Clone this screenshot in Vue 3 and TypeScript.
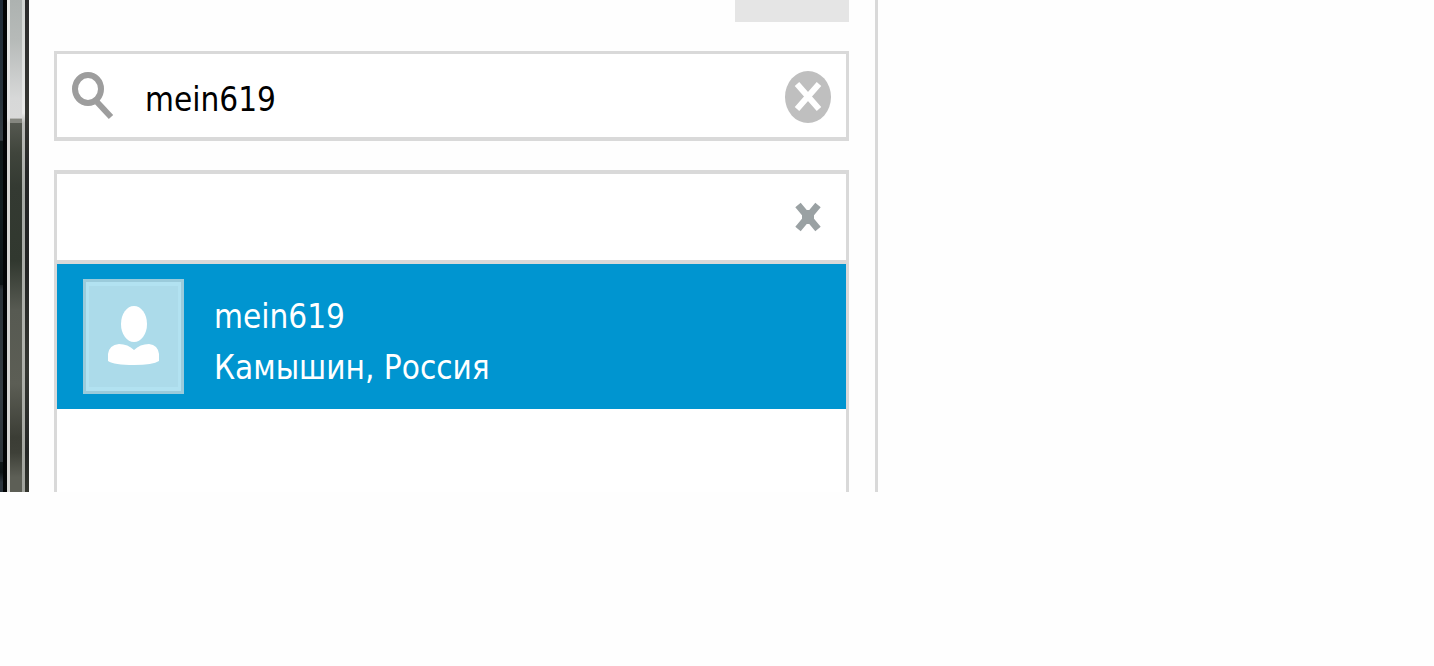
<script setup lang="ts">
import { ref } from 'vue'

interface Contact {
  name: string
  place: string
}

const query = ref('mein619')
const contacts: Contact[] = [{ name: 'mein619', place: 'Камышин, Россия' }]
</script>

<template>
  <main class="page">
    <div class="frame" aria-hidden="true">
      <span class="desktop"></span>
      <span class="shadow"></span>
      <span class="edge"></span>
      <span class="glass"></span>
      <span class="edge inner"></span>
      <span class="rim"></span>
    </div>

    <section class="sidebar">
      <div class="tab"></div>

      <form class="search" @submit.prevent>
        <svg class="lens" viewBox="0 0 42 50" aria-hidden="true">
          <ellipse cx="16" cy="17" rx="13" ry="14" />
          <path d="M25 30 L39 45" />
        </svg>
        <input v-model="query" type="text" aria-label="Search" spellcheck="false" />
        <button type="button" class="clear" aria-label="Clear" @click="query = ''">
          <svg viewBox="0 0 46 52" aria-hidden="true">
            <ellipse cx="23" cy="26" rx="23" ry="26" />
            <path d="M12 13 L34 38 M34 13 L12 38" />
          </svg>
        </button>
      </form>

      <div class="results">
        <header>
          <button type="button" class="close" aria-label="Close">
            <svg viewBox="0 0 26 30" aria-hidden="true">
              <path d="M3 3 L23 27 M23 3 L3 27" />
              <rect x="7" y="8" width="12" height="14" />
            </svg>
          </button>
        </header>
        <ul>
          <li v-for="contact in contacts" :key="contact.name">
            <svg class="avatar" viewBox="0 0 101 115" aria-hidden="true">
              <rect class="avatar-edge" width="101" height="115" />
              <rect class="avatar-glow" x="3" y="3" width="95" height="109" />
              <rect class="avatar-fill" x="6" y="7" width="89" height="101" />
              <ellipse class="person" cx="51" cy="45" rx="13" ry="18" />
              <path class="person" d="M25 75 Q26 66 36 65 Q45 65 51 71 Q57 65 66 65 Q75 66 76 75 V82 Q70 86 51 86 Q31 86 25 82 Z" />
            </svg>
            <div class="details">
              <span>{{ contact.name }}</span>
              <span>{{ contact.place }}</span>
            </div>
          </li>
        </ul>
      </div>
    </section>
  </main>
</template>

<style>
body {
  background: #fefefe;
}
</style>

<style scoped>
.page {
  display: grid;
  grid-template-columns: 29px minmax(0, 849fr) minmax(0, 556fr);
  font-family: "DejaVu Sans Condensed", "Noto Sans", sans-serif;
  font-size: 33px;
}

.frame {
  display: grid;
  grid-template-columns: 3px 4px 3px 12px 3px 4px;
}

.desktop {
  background: linear-gradient(#1d2a37, #26323b 20%, #343d43 28.5%, #0d1617 28.7%, #101c20 42%, #0b1214 58%, #1c2022 58%, #293238 59%, #333c43 80%, #2b3339 94%, #0e1618 94%, #0b1214 96%, #29323b 98%);
}

.shadow {
  background: #020405;
}

.edge {
  background: linear-gradient(#e8eae9, #e5e5e5 24%, #d6d6d4 25%, #d6d6d4);
}

.glass {
  background: linear-gradient(#adb2b0, #b6bab8 8%, #d7d8d8 20%, #d9d9d9 24%, #85867f 24.2%, #85867f 25%, #555850 25%, #40453c 31%, #343a32 38%, #31382f 53%, #575a52 63%, #5c5e55 78%, #3b3d35 89%, #3e4038 92%, #5d5f56 97%);
}

.edge.inner {
  background: linear-gradient(#d0d3d1, #e9eae9 23%, #babbb8 25%, #a5a9a4 40%, #b0b2ac 70%, #a2a49e);
}

.rim {
  background: linear-gradient(#2a2a2b, #353632 23%, #242626 35%, #222423 55%, #343631 75%, #242625 92%, #34362f);
}

.sidebar {
  padding: 0 26px 0 25px;
  border-right: 3px solid #d9d9d9;
}

.tab {
  width: 114px;
  height: 22px;
  margin-left: auto;
  background: #e5e5e5;
}

.search {
  display: flex;
  align-items: center;
  height: 80px;
  margin: 29px 0;
  padding: 3px 15px 0;
  border: 3px solid #d9d9d9;
  border-bottom-width: 4px;
  background: #fff;
}

.lens {
  flex: none;
  width: 42px;
  height: 50px;
  fill: none;
  stroke: #9d9d9d;
  stroke-width: 6;
}

.search input {
  flex: 1;
  min-width: 0;
  height: 48px;
  margin: 0 16px 0 31px;
  padding: 4px 0 0;
  border: 0;
  outline: 0;
  background: transparent;
  color: #000;
  font: inherit;
}

button {
  flex: none;
  padding: 0;
  border: 0;
  background: transparent;
  cursor: pointer;
}

button svg {
  display: block;
  width: 100%;
  height: 100%;
}

.clear {
  width: 46px;
  height: 52px;
}

.clear ellipse {
  fill: #bfbfbf;
}

.clear path {
  fill: none;
  stroke: #fff;
  stroke-width: 6;
}

.results {
  border: 3px solid #d9d9d9;
  border-top-width: 4px;
  border-bottom: 0;
  background: #fff;
}

.results header {
  display: flex;
  align-items: center;
  justify-content: flex-end;
  height: 86px;
  padding: 0 25px;
  border-bottom: 4px solid #d9d9d9;
}

.close {
  width: 26px;
  height: 30px;
}

.close path {
  stroke: #9aa1a3;
  stroke-width: 7;
}

.close rect {
  fill: #9aa1a3;
}

ul {
  margin: 0;
  padding: 0 0 83px;
  list-style: none;
}

li {
  display: flex;
  align-items: center;
  gap: 30px;
  height: 145px;
  padding: 0 26px;
  background: #0095d0;
  color: #fff;
}

.avatar {
  flex: none;
  width: 101px;
  height: 115px;
}

.avatar-edge {
  fill: #9bcbdb;
}

.avatar-glow {
  fill: #b2e2f1;
}

.avatar-fill {
  fill: #acdbea;
}

.person {
  fill: #fff;
}

.details {
  display: flex;
  flex-direction: column;
  padding-top: 11px;
  line-height: 51px;
  white-space: nowrap;
}
</style>
